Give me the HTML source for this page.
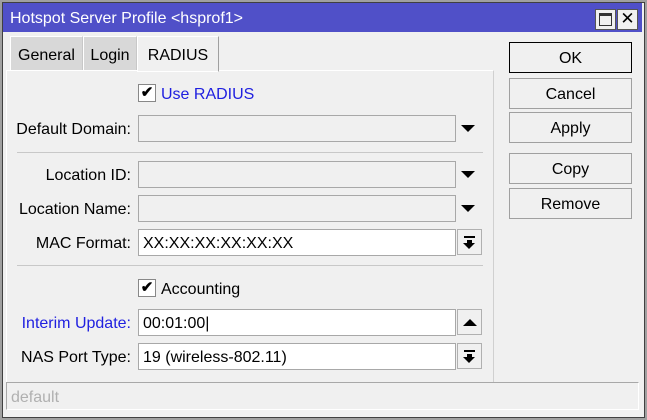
<!DOCTYPE html>
<html><head><style>
*{box-sizing:border-box;margin:0;padding:0}
body{width:647px;height:420px;background:#a0a0a0;font-family:"Liberation Sans",sans-serif;font-size:16px;color:#000;position:relative;overflow:hidden}
.a{position:absolute}
.win{left:2px;top:2px;width:643px;height:416px;background:#f0f0f0;border:1px solid #404040}
.title{left:3px;top:3px;width:639px;height:29px;background:#5050c8;color:#fff;font-size:16px;padding:7px 0 0 7px}
.tb{width:21px;height:21px;background:#f0f0f0;border:1px solid #555;top:9px}
.tab{top:36px;height:35px;background:#d8d8d8;border:1px solid #fff;border-right:1px solid #c8c8c8;padding-top:10px;text-align:center;font-size:16px}
.panel{left:6px;top:70px;width:488px;height:312px;border-top:1px solid #fff;border-right:1px solid #d0d0d0;border-left:1px solid #fff}
.lbl{text-align:right;width:131px;left:0;font-size:16px}
.fld{left:138px;width:318px;height:27px;border:1px solid #a8a8a8;background:#f0f0f0;padding:5px 0 0 4px;font-size:16px}
.w{background:#fff}
.dd{left:461px;width:0;height:0;border-left:7px solid transparent;border-right:7px solid transparent;border-top:7px solid #000}
.sb{left:457px;width:25px;height:26px;border:1px solid #b0b0b0;background:#f0f0f0}
.sep{left:17px;width:466px;height:1px;background:#c8c8c8}
.cb{left:138px;width:18px;height:18px;border:1px solid #888;background:#fff;font-size:15px;line-height:16px;text-align:center;font-weight:bold}
.btn{left:509px;width:123px;height:31px;border:1px solid #a0a0a0;background:#f0f0f0;text-align:center;padding-top:7px;font-size:16px}
</style></head><body>
<div class="a win"></div>
<div class="a title">Hotspot Server Profile &lt;hsprof1&gt;</div>
<div class="a tb" style="left:595px"><div class="a" style="left:3px;top:3px;width:13px;height:13px;border:1px solid #333;border-top:3px solid #333"></div></div>
<div class="a tb" style="left:617px;font-size:17px;line-height:18px;text-align:center">✕</div>
<div class="a tab" style="left:10px;width:73px">General</div>
<div class="a tab" style="left:83px;width:54px">Login</div>
<div class="a tab" style="left:137px;width:82px;background:#f0f0f0;height:36px;border-right:1px solid #a0a0a0;z-index:2">RADIUS</div>
<div class="a panel"></div>
<div class="a cb" style="top:84px">✔</div>
<div class="a" style="left:161px;top:86px;color:#2020e0">Use RADIUS</div>
<div class="a lbl" style="top:121px">Default Domain:</div>
<div class="a fld" style="top:115px"></div><div class="a dd" style="top:125px"></div>
<div class="a sep" style="top:152px"></div>
<div class="a lbl" style="top:167px">Location ID:</div>
<div class="a fld" style="top:161px"></div><div class="a dd" style="top:171px"></div>
<div class="a lbl" style="top:201px">Location Name:</div>
<div class="a fld" style="top:195px"></div><div class="a dd" style="top:205px"></div>
<div class="a lbl" style="top:235px">MAC Format:</div>
<div class="a fld w" style="top:229px">XX:XX:XX:XX:XX:XX</div>
<div class="a sb" style="top:229px"><div class="a" style="left:6px;top:6px;width:11px;height:2px;background:#000"></div><div class="a" style="left:9px;top:10px;width:5px;height:3px;background:#000"></div><div class="a" style="left:5px;top:13px;border-left:6px solid transparent;border-right:6px solid transparent;border-top:6px solid #000"></div></div>
<div class="a sep" style="top:265px"></div>
<div class="a cb" style="top:279px">✔</div>
<div class="a" style="left:161px;top:281px">Accounting</div>
<div class="a lbl" style="top:315px;color:#2020e0">Interim Update:</div>
<div class="a fld w" style="top:309px">00:01:00|</div>
<div class="a sb" style="top:309px"><div class="a" style="left:5px;top:9px;border-left:7px solid transparent;border-right:7px solid transparent;border-bottom:7px solid #000"></div></div>
<div class="a lbl" style="top:349px">NAS Port Type:</div>
<div class="a fld w" style="top:343px">19 (wireless-802.11)</div>
<div class="a sb" style="top:343px"><div class="a" style="left:6px;top:6px;width:11px;height:2px;background:#000"></div><div class="a" style="left:9px;top:10px;width:5px;height:3px;background:#000"></div><div class="a" style="left:5px;top:13px;border-left:6px solid transparent;border-right:6px solid transparent;border-top:6px solid #000"></div></div>
<div class="a" style="left:6px;top:382px;width:633px;height:28px;border:1px solid #a8a8a8;border-right-color:#fff;border-bottom-color:#fff;color:#b0b0b0;padding:6px 0 0 4px">default</div>
<div class="a btn" style="top:42px;border:1px solid #000">OK</div>
<div class="a btn" style="top:78px">Cancel</div>
<div class="a btn" style="top:112px">Apply</div>
<div class="a btn" style="top:153px">Copy</div>
<div class="a btn" style="top:188px">Remove</div>
</body></html>
